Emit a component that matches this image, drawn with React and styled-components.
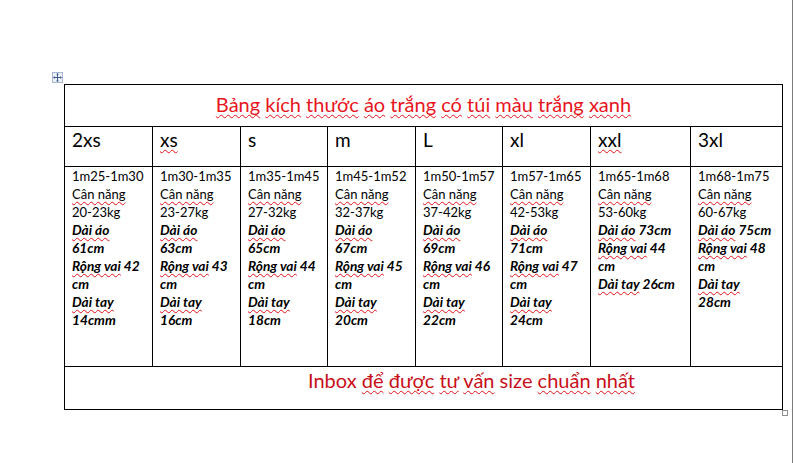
import React from 'react';
import styled, { createGlobalStyle } from 'styled-components';

const GlobalStyle = createGlobalStyle`
  html, body {
    margin: 0;
    padding: 0;
    background: #fff;
  }
  body {
    font-family: Lato, "Liberation Sans", sans-serif;
    color: #000;
  }
`;

// "\n" marks where Word wrapped the line inside the narrow cell
const sizes = [
  { size: '2xs', height: '1m25-1m30', weight: '20-23kg', length: '\n61cm', shoulder: ' 42\ncm', sleeve: '\n14cmm' },
  { size: 'xs', flagged: true, height: '1m30-1m35', weight: '23-27kg', length: '\n63cm', shoulder: ' 43\ncm', sleeve: '\n16cm' },
  { size: 's', height: '1m35-1m45', weight: '27-32kg', length: '\n65cm', shoulder: ' 44\ncm', sleeve: '\n18cm' },
  { size: 'm', height: '1m45-1m52', weight: '32-37kg', length: '\n67cm', shoulder: ' 45\ncm', sleeve: '\n20cm' },
  { size: 'L', height: '1m50-1m57', weight: '37-42kg', length: '\n69cm', shoulder: ' 46\ncm', sleeve: '\n22cm' },
  { size: 'xl', height: '1m57-1m65', weight: '42-53kg', length: '\n71cm', shoulder: ' 47\ncm', sleeve: '\n24cm' },
  { size: 'xxl', flagged: true, height: '1m65-1m68', weight: '53-60kg', length: ' 73cm', shoulder: ' 44\ncm', sleeve: ' 26cm' },
  { size: '3xl', height: '1m68-1m75', weight: '60-67kg', length: ' 75cm', shoulder: ' 48\ncm', sleeve: '\n28cm' },
];

// words flagged by the spell checker get the red squiggle
const titleWords = ['Bảng', 'kích', 'thước', 'áo', 'trắng', 'có', 'túi', 'màu', 'trắng', 'xanh'];
const footerWords = [
  ['Inbox', false], ['để', true], ['được', true], ['tư', true],
  ['vấn', true], ['size', false], ['chuẩn', true], ['nhất', true],
];

const Page = styled.div`
  box-sizing: border-box;
  width: 793px;
  height: 463px;
  padding: 84px 0 0 64px;
  border-right: 1px solid #7c7c7c;
`;

const TableWrap = styled.div`
  position: relative;
  width: max-content;
`;

const SizeTable = styled.div`
  display: grid;
  grid-template-columns: 88px 88px 87px 88px 87px 88px 100px 92px;
  grid-template-rows: 42px 40px 200px 43px;
  border-left: 1px solid #000;
  border-top: 1px solid #000;
`;

const Cell = styled.div`
  border-right: 1px solid #000;
  border-bottom: 1px solid #000;
  padding: 0 7px;
  min-width: 0;
`;

const BannerCell = styled(Cell)`
  grid-column: 1 / -1;
  text-align: center;
  font-size: 20px;
  line-height: 24px;
  color: ${(p) => p.$color};
  padding-top: ${(p) => p.$top}px;
  padding-left: ${(p) => p.$shift}px;
`;

const HeadCell = styled(Cell)`
  font-size: 19px;
  line-height: 24px;
  padding-top: 1px;
`;

const DataCell = styled(Cell)`
  font-size: 13px;
  line-height: 18px;
  white-space: nowrap;
`;

const Line = styled.div`
  height: 18px;
`;

const Spec = styled.div`
  font-size: 13.7px;
  font-weight: 700;
  font-style: italic;
`;

const Squiggle = styled.span`
  text-decoration: underline wavy #e3121b;
  text-decoration-thickness: 1px;
  text-underline-offset: 2px;
  text-decoration-skip-ink: none;
`;

const MoveHandle = styled.div`
  position: absolute;
  left: -12px;
  top: -12px;
  width: 9px;
  height: 9px;
  border: 1px solid #a7b6cd;
  background: #eef2f8;
  display: flex;
  align-items: center;
  justify-content: center;
`;

const ResizeHandle = styled.div`
  position: absolute;
  right: -5px;
  bottom: -6px;
  width: 4px;
  height: 4px;
  border: 1px solid #8e8e8e;
  background: #fff;
`;

function Words({ words }) {
  return words.map(([word, flagged], i) => (
    <React.Fragment key={i}>
      {i > 0 && ' '}
      {flagged ? <Squiggle>{word}</Squiggle> : word}
    </React.Fragment>
  ));
}

function Wrapped({ label, value, as: Wrapper = React.Fragment }) {
  const [first, ...rest] = value.split('\n');
  return (
    <Wrapper>
      <Line>
        <Squiggle>{label}</Squiggle>
        {first}
      </Line>
      {rest.map((part, i) => (
        <Line key={i}>{part}</Line>
      ))}
    </Wrapper>
  );
}

export default function App() {
  return (
    <>
      <GlobalStyle />
      <Page>
        <TableWrap>
          <MoveHandle>
            <svg width="9" height="9" viewBox="0 0 9 9">
              <path d="M4.5 1v7M1 4.5h7" stroke="#3f5c8c" strokeWidth="1" />
              <path d="M4.5 0L3 1.6h3zM4.5 9L3 7.4h3zM0 4.5L1.6 3v3zM9 4.5L7.4 3v3z" fill="#3f5c8c" />
            </svg>
          </MoveHandle>
          <SizeTable>
            <BannerCell $color="#e8151d" $top={7} $shift={7}>
              <Words words={titleWords.map((w) => [w, true])} />
            </BannerCell>
            {sizes.map((s) => (
              <HeadCell key={s.size}>
                {s.flagged ? <Squiggle>{s.size}</Squiggle> : s.size}
              </HeadCell>
            ))}
            {sizes.map((s) => (
              <DataCell key={s.size}>
                <Line>{s.height}</Line>
                <Wrapped label="Cân năng" value={'\n' + s.weight} />
                <Wrapped as={Spec} label="Dài áo" value={s.length} />
                <Wrapped as={Spec} label="Rộng vai" value={s.shoulder} />
                <Wrapped as={Spec} label="Dài tay" value={s.sleeve} />
              </DataCell>
            ))}
            <BannerCell $color="#c8101a" $top={1} $shift={103}>
              <Words words={footerWords} />
            </BannerCell>
          </SizeTable>
          <ResizeHandle />
        </TableWrap>
      </Page>
    </>
  );
}
